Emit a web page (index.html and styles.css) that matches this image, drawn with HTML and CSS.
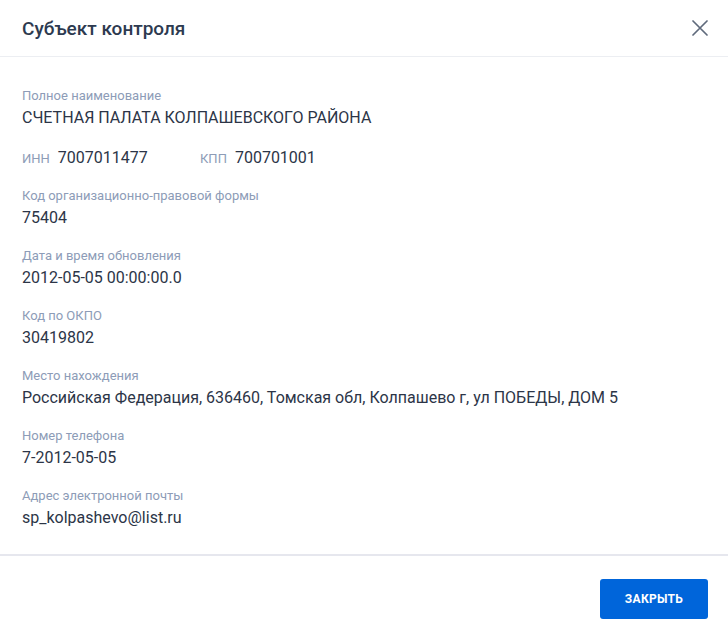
FILE: index.html
```html
<!DOCTYPE html>
<html lang="ru">
<head>
<meta charset="utf-8">
<link rel="stylesheet" href="styles.css">
</head>
<body>
<div class="modal">
  <header class="modal-header">
    <h1 class="modal-title">Субъект контроля</h1>
    <button class="close" aria-label="Закрыть">
      <svg width="16" height="16" viewBox="0 0 16 16"><path d="M1 1 L15 15 M15 1 L1 15" stroke="#5f6a7c" stroke-width="1.7" fill="none" stroke-linecap="round"/></svg>
    </button>
  </header>
  <main class="modal-body">
    <div class="field">
      <div class="label">Полное наименование</div>
      <div class="value">СЧЕТНАЯ ПАЛАТА КОЛПАШЕВСКОГО РАЙОНА</div>
    </div>
    <div class="field inline-row">
      <div class="inline"><span class="label">ИНН</span><span class="value">7007011477</span></div>
      <div class="inline"><span class="label">КПП</span><span class="value">700701001</span></div>
    </div>
    <div class="field">
      <div class="label">Код организационно-правовой формы</div>
      <div class="value">75404</div>
    </div>
    <div class="field">
      <div class="label">Дата и время обновления</div>
      <div class="value">2012-05-05 00:00:00.0</div>
    </div>
    <div class="field">
      <div class="label">Код по ОКПО</div>
      <div class="value">30419802</div>
    </div>
    <div class="field">
      <div class="label">Место нахождения</div>
      <div class="value">Российская Федерация, 636460, Томская обл, Колпашево г, ул ПОБЕДЫ, ДОМ 5</div>
    </div>
    <div class="field">
      <div class="label">Номер телефона</div>
      <div class="value">7-2012-05-05</div>
    </div>
    <div class="field">
      <div class="label">Адрес электронной почты</div>
      <div class="value">sp_kolpashevo@list.ru</div>
    </div>
  </main>
  <footer class="modal-footer">
    <button class="btn-primary">Закрыть</button>
  </footer>
</div>
</body>
</html>
```
FILE: styles.css
```css
* { box-sizing: border-box; }
html, body { margin: 0; padding: 0; background: #fff; }
body { font-family: Roboto, "Noto Sans", sans-serif; color: #2b3445; overflow: hidden; }
.modal { width: 728px; min-height: 637px; display: flex; flex-direction: column; background: #fff; }
.modal > * { flex-shrink: 0; }
.modal-header {
  height: 57px; display: flex; align-items: center; justify-content: space-between;
  padding: 0 20px 0 22px; border-bottom: 1px solid #eceef2;
}
.modal-title { margin: 0; font-size: 19px; font-weight: 500; color: #2d3a50; }
.close { background: none; border: 0; padding: 0; width: 16px; height: 16px; cursor: pointer; display: flex; }
.modal-body { padding: 29px 22px 24px; display: flex; flex-direction: column; gap: 16px; border-bottom: 2px solid #e6e7ee; }
.field { display: flex; flex-direction: column; }
.label { font-size: 13px; line-height: 20px; color: #8d9cb7; }
.value { font-size: 16px; line-height: 24px; color: #2c3547; }
.inline-row { flex-direction: row; gap: 0; }
.inline { display: flex; align-items: baseline; gap: 8px; width: 178px; }
.modal-footer { display: flex; justify-content: flex-end; padding: 23px 20px 18px; }
.btn-primary {
  width: 108px; height: 40px; border: 0; border-radius: 3px; background: #0065da; color: #fff;
  font-family: Roboto, sans-serif; font-weight: 700; font-size: 12px; text-transform: uppercase; letter-spacing: 0.3px;
}
```
